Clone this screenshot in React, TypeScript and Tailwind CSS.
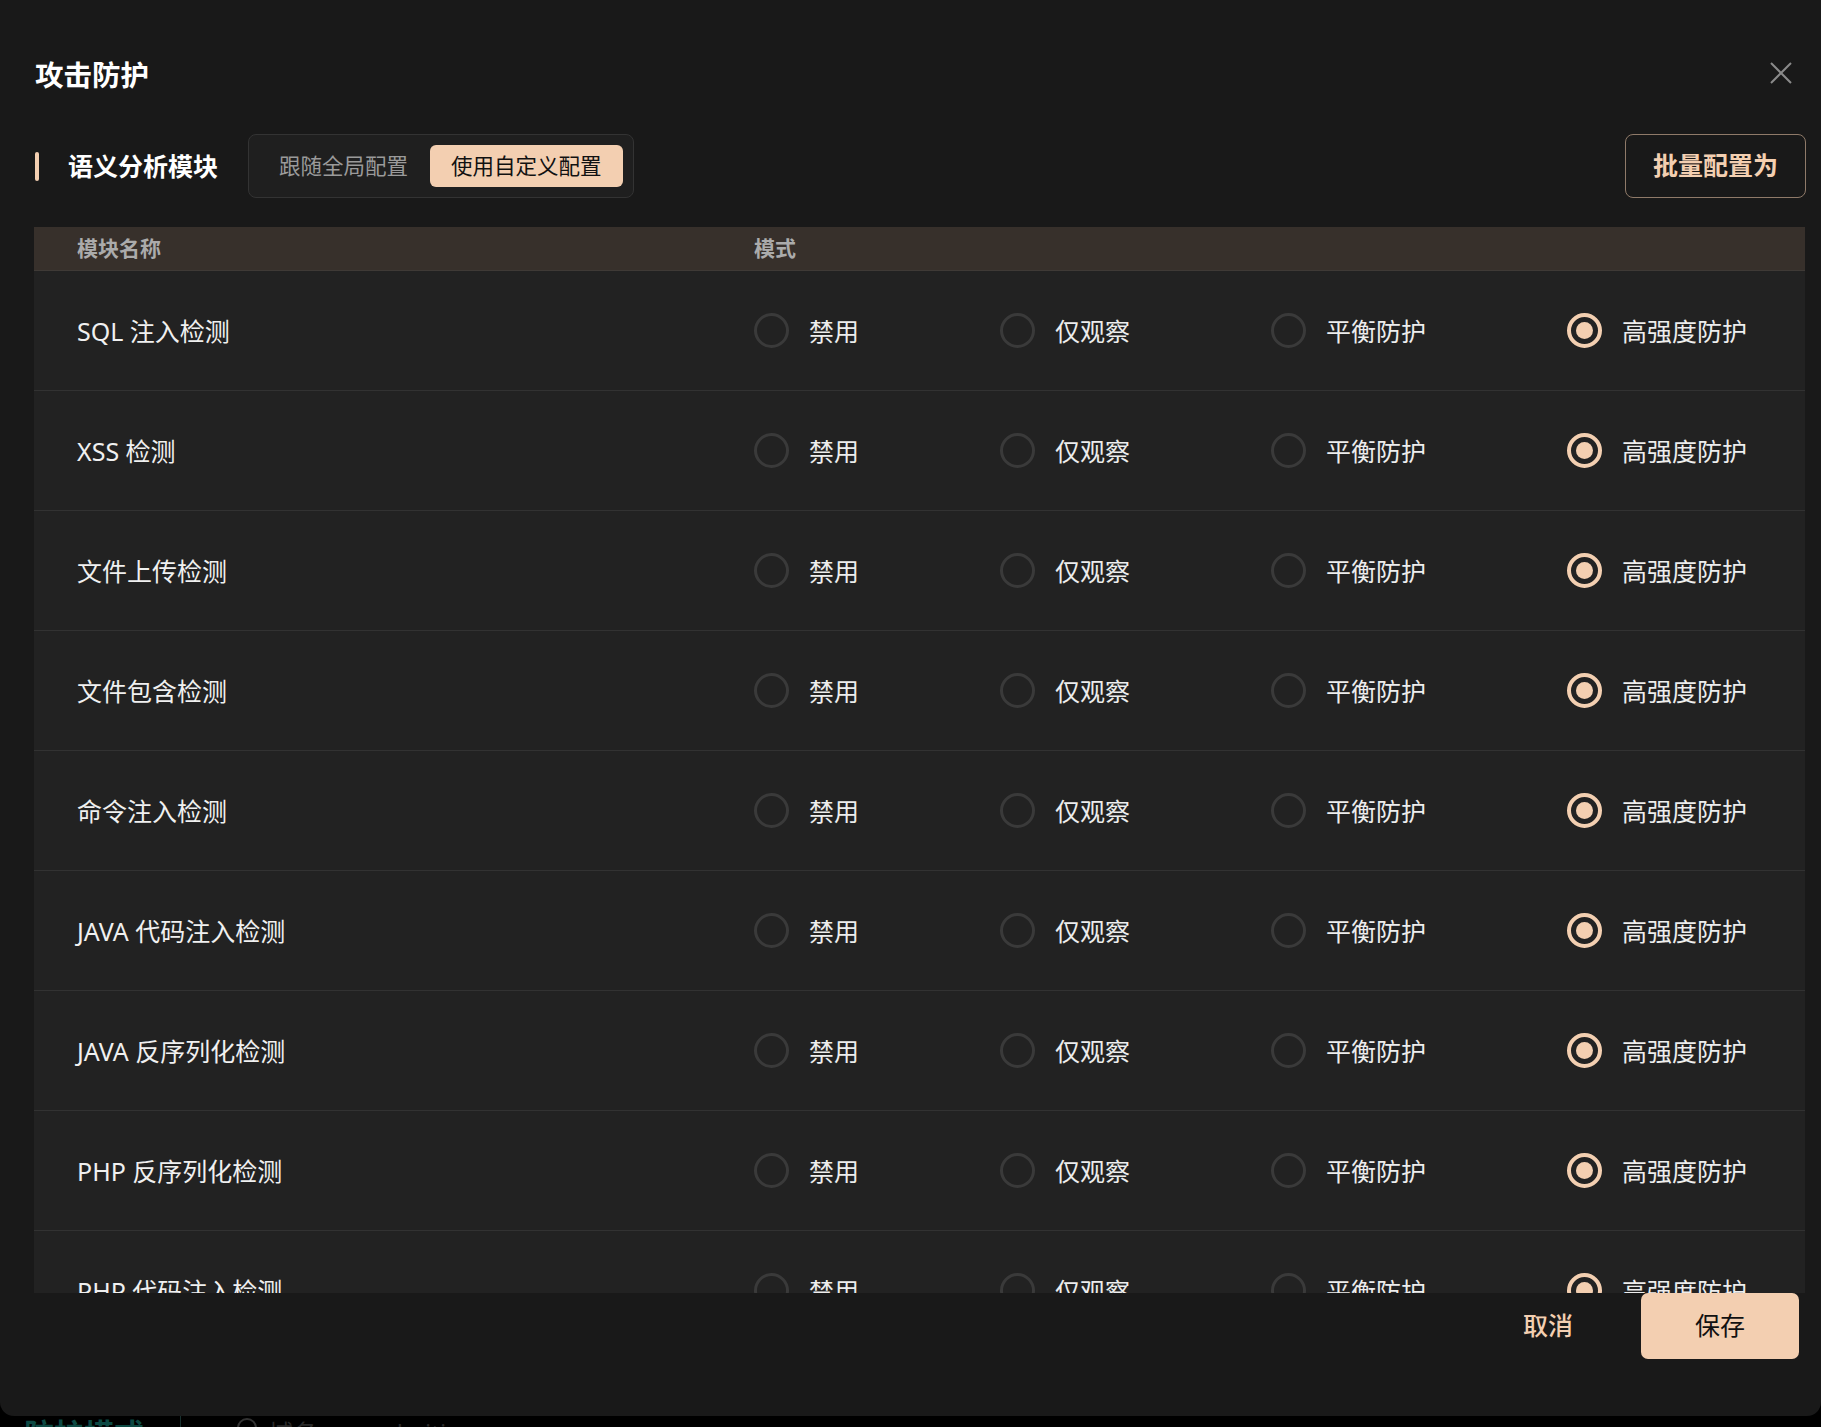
import { useState } from 'react';

type Mode = 'off' | 'watch' | 'balance' | 'strict';

const MODES: { key: Mode; label: string }[] = [
  { key: 'off', label: '禁用' },
  { key: 'watch', label: '仅观察' },
  { key: 'balance', label: '平衡防护' },
  { key: 'strict', label: '高强度防护' },
];

const MODULES = [
  'SQL 注入检测',
  'XSS 检测',
  '文件上传检测',
  '文件包含检测',
  '命令注入检测',
  'JAVA 代码注入检测',
  'JAVA 反序列化检测',
  'PHP 反序列化检测',
  'PHP 代码注入检测',
  'SSRF 检测',
];

function Radio({ checked, label, onClick }: { checked: boolean; label: string; onClick: () => void }) {
  return (
    <button type="button" onClick={onClick} className="flex items-center gap-[20px] shrink-0">
      {checked ? (
        <span className="w-[35px] h-[35px] rounded-full border-[4px] border-[#f3cfb1] flex items-center justify-center">
          <span className="w-[17px] h-[17px] rounded-full bg-[#f3cfb1]" />
        </span>
      ) : (
        <span className="w-[35px] h-[35px] rounded-full border-[3px] border-[#3a3a3a]" />
      )}
      <span className="text-[25px] leading-[34px] text-[#ededed]">{label}</span>
    </button>
  );
}

export default function App() {
  const [custom, setCustom] = useState(true);
  const [modes, setModes] = useState<Mode[]>(MODULES.map(() => 'strict'));

  return (
    <div className="w-[1821px] h-[1427px] bg-black overflow-hidden font-['Noto_Sans','Noto_Sans_CJK_SC',sans-serif]">
      <div className="h-[1416px] bg-[#191919] rounded-b-[14px] flex flex-col pl-[34px] pr-[16px]">
        {/* header */}
        <div className="flex items-center justify-between pt-[55px] pl-px pr-[13px]">
          <h1 className="text-[28.5px] leading-[40px] font-bold text-white">攻击防护</h1>
          <button type="button" className="w-[22px] h-[22px] -mt-[4px]">
            <svg viewBox="0 0 22 22" className="w-[22px] h-[22px]" fill="none" stroke="#8a8a8a" strokeWidth="2">
              <path d="M1 1L21 21M21 1L1 21" />
            </svg>
          </button>
        </div>

        {/* section bar */}
        <div className="flex items-center justify-between mt-[39px] h-[64px]">
          <div className="flex items-center">
            <span className="w-[4px] h-[29px] ml-px rounded-full bg-[#f3cfb1]" />
            <span className="ml-[29px] text-[25px] leading-[34px] font-bold text-white">语义分析模块</span>
            <div className="ml-[30px] h-[64px] w-[386px] flex items-center gap-px px-[9px] border border-[#333] rounded-[8px] bg-[#1f1f1f]">
              <button
                type="button"
                onClick={() => setCustom(false)}
                className={`h-[42px] px-[21px] rounded-[6px] text-[21.5px] ${!custom ? 'bg-[#f3cfb1] text-[#111]' : 'text-[#9a9a9a]'}`}
              >
                跟随全局配置
              </button>
              <button
                type="button"
                onClick={() => setCustom(true)}
                className={`h-[42px] px-[21px] rounded-[6px] text-[21.5px] ${custom ? 'bg-[#f3cfb1] text-[#111]' : 'text-[#9a9a9a]'}`}
              >
                使用自定义配置
              </button>
            </div>
          </div>
          <button
            type="button"
            className="h-[64px] w-[181px] -mr-px border border-[#8f7a69] rounded-[8px] text-[25px] font-semibold text-[#f3cfb1]"
          >
            批量配置为
          </button>
        </div>

        {/* table */}
        <div className="mt-[29px] flex-1 min-h-0 overflow-hidden flex flex-col">
          <div className="h-[44px] shrink-0 flex items-center bg-[#37302b] border-b border-[#3f3a36] text-[21px] font-semibold text-[#ababab]">
            <div className="w-[720px] pl-[43px]">模块名称</div>
            <div>模式</div>
          </div>
          {MODULES.map((name, i) => (
            <div key={name} className="h-[120px] shrink-0 flex items-center bg-[#222222] border-b border-[#323232]">
              <div className="w-[720px] pl-[43px] text-[25px] leading-[34px] text-[#f0f0f0]">{name}</div>
              <div className="flex items-center gap-[141px]">
                {MODES.map((m) => (
                  <Radio
                    key={m.key}
                    label={m.label}
                    checked={modes[i] === m.key}
                    onClick={() => setModes((prev) => prev.map((v, j) => (j === i ? m.key : v)))}
                  />
                ))}
              </div>
            </div>
          ))}
        </div>

        {/* footer */}
        <div className="h-[123px] shrink-0 flex items-start justify-end gap-[44px] pr-[6px]">
          <button type="button" className="h-[66px] px-[24px] text-[25px] font-medium text-[#f3cfb1]">
            取消
          </button>
          <button type="button" className="h-[66px] w-[158px] rounded-[7px] bg-[#f3cfb1] text-[25px] text-[#111]">
            保存
          </button>
        </div>
      </div>

      {/* page underneath the modal */}
      <div className="h-[11px] overflow-hidden flex items-start">
        <span className="ml-[24px] text-[30px] leading-[36px] font-bold text-[#0d4a44]">防护模式</span>
        <span className="ml-[36px] w-px h-[11px] bg-[#18302e]" />
        <span className="ml-[56px] mt-[2px] w-[20px] h-[20px] rounded-full border-2 border-[#333]" />
        <span className="ml-[12px] text-[24px] leading-[34px] text-[#2a2a2a]">域名 www.chaitin.com</span>
      </div>
    </div>
  );
}
